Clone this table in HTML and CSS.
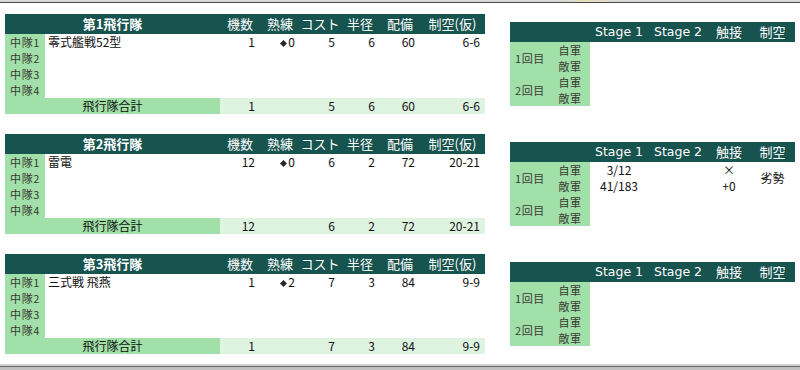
FILE: index.html
```html
<!DOCTYPE html>
<html lang="ja">
<head>
<meta charset="utf-8">
<title>制空計算</title>
<link rel="stylesheet" href="styles.css">
</head>
<body>
<div class="topbar"></div>
<main class="sheet">
  <section class="block">
    <table class="fleet">
      <colgroup><col class="c-lab"><col class="c-name"><col class="c-n"><col class="c-n"><col class="c-n"><col class="c-n"><col class="c-n"><col class="c-air"></colgroup>
      <thead><tr><th colspan="2" class="title">第1飛行隊</th><th>機数</th><th>熟練</th><th>コスト</th><th>半径</th><th>配備</th><th>制空(仮)</th></tr></thead>
      <tbody>
        <tr><td class="lab">中隊1</td><td class="name">零式艦戦52型</td><td class="num">1</td><td class="num"><span class="dia"></span>0</td><td class="num">5</td><td class="num">6</td><td class="num">60</td><td class="num">6-6</td></tr>
        <tr><td class="lab">中隊2</td><td class="name"></td><td></td><td></td><td></td><td></td><td></td><td></td></tr>
        <tr><td class="lab">中隊3</td><td class="name"></td><td></td><td></td><td></td><td></td><td></td><td></td></tr>
        <tr><td class="lab">中隊4</td><td class="name"></td><td></td><td></td><td></td><td></td><td></td><td></td></tr>
        <tr class="total"><td colspan="2" class="tlab">飛行隊合計</td><td class="num">1</td><td class="num"></td><td class="num">5</td><td class="num">6</td><td class="num">60</td><td class="num">6-6</td></tr>
      </tbody>
    </table>
    <table class="battle">
      <colgroup><col class="b-lab"><col class="b-side"><col class="b-s1"><col class="b-s2"><col class="b-c"><col class="b-a"></colgroup>
      <thead><tr><th colspan="2"></th><th class="lat">Stage 1</th><th class="lat">Stage 2</th><th>触接</th><th>制空</th></tr></thead>
      <tbody>
        <tr><td rowspan="2" class="lab">1回目</td><td class="lab">自軍</td><td></td><td></td><td></td><td rowspan="2"></td></tr>
        <tr><td class="lab">敵軍</td><td></td><td></td><td></td></tr>
        <tr><td rowspan="2" class="lab">2回目</td><td class="lab">自軍</td><td></td><td></td><td></td><td rowspan="2"></td></tr>
        <tr><td class="lab">敵軍</td><td></td><td></td><td></td></tr>
      </tbody>
    </table>
  </section>

  <section class="block">
    <table class="fleet">
      <colgroup><col class="c-lab"><col class="c-name"><col class="c-n"><col class="c-n"><col class="c-n"><col class="c-n"><col class="c-n"><col class="c-air"></colgroup>
      <thead><tr><th colspan="2" class="title">第2飛行隊</th><th>機数</th><th>熟練</th><th>コスト</th><th>半径</th><th>配備</th><th>制空(仮)</th></tr></thead>
      <tbody>
        <tr><td class="lab">中隊1</td><td class="name">雷電</td><td class="num">12</td><td class="num"><span class="dia"></span>0</td><td class="num">6</td><td class="num">2</td><td class="num">72</td><td class="num">20-21</td></tr>
        <tr><td class="lab">中隊2</td><td class="name"></td><td></td><td></td><td></td><td></td><td></td><td></td></tr>
        <tr><td class="lab">中隊3</td><td class="name"></td><td></td><td></td><td></td><td></td><td></td><td></td></tr>
        <tr><td class="lab">中隊4</td><td class="name"></td><td></td><td></td><td></td><td></td><td></td><td></td></tr>
        <tr class="total"><td colspan="2" class="tlab">飛行隊合計</td><td class="num">12</td><td class="num"></td><td class="num">6</td><td class="num">2</td><td class="num">72</td><td class="num">20-21</td></tr>
      </tbody>
    </table>
    <table class="battle">
      <colgroup><col class="b-lab"><col class="b-side"><col class="b-s1"><col class="b-s2"><col class="b-c"><col class="b-a"></colgroup>
      <thead><tr><th colspan="2"></th><th class="lat">Stage 1</th><th class="lat">Stage 2</th><th>触接</th><th>制空</th></tr></thead>
      <tbody>
        <tr><td rowspan="2" class="lab">1回目</td><td class="lab">自軍</td><td class="c">3/12</td><td></td><td class="c">×</td><td rowspan="2" class="c">劣勢</td></tr>
        <tr><td class="lab">敵軍</td><td class="c">41/183</td><td></td><td class="c">+0</td></tr>
        <tr><td rowspan="2" class="lab">2回目</td><td class="lab">自軍</td><td></td><td></td><td></td><td rowspan="2"></td></tr>
        <tr><td class="lab">敵軍</td><td></td><td></td><td></td></tr>
      </tbody>
    </table>
  </section>

  <section class="block">
    <table class="fleet">
      <colgroup><col class="c-lab"><col class="c-name"><col class="c-n"><col class="c-n"><col class="c-n"><col class="c-n"><col class="c-n"><col class="c-air"></colgroup>
      <thead><tr><th colspan="2" class="title">第3飛行隊</th><th>機数</th><th>熟練</th><th>コスト</th><th>半径</th><th>配備</th><th>制空(仮)</th></tr></thead>
      <tbody>
        <tr><td class="lab">中隊1</td><td class="name">三式戦 飛燕</td><td class="num">1</td><td class="num"><span class="dia"></span>2</td><td class="num">7</td><td class="num">3</td><td class="num">84</td><td class="num">9-9</td></tr>
        <tr><td class="lab">中隊2</td><td class="name"></td><td></td><td></td><td></td><td></td><td></td><td></td></tr>
        <tr><td class="lab">中隊3</td><td class="name"></td><td></td><td></td><td></td><td></td><td></td><td></td></tr>
        <tr><td class="lab">中隊4</td><td class="name"></td><td></td><td></td><td></td><td></td><td></td><td></td></tr>
        <tr class="total"><td colspan="2" class="tlab">飛行隊合計</td><td class="num">1</td><td class="num"></td><td class="num">7</td><td class="num">3</td><td class="num">84</td><td class="num">9-9</td></tr>
      </tbody>
    </table>
    <table class="battle">
      <colgroup><col class="b-lab"><col class="b-side"><col class="b-s1"><col class="b-s2"><col class="b-c"><col class="b-a"></colgroup>
      <thead><tr><th colspan="2"></th><th class="lat">Stage 1</th><th class="lat">Stage 2</th><th>触接</th><th>制空</th></tr></thead>
      <tbody>
        <tr><td rowspan="2" class="lab">1回目</td><td class="lab">自軍</td><td></td><td></td><td></td><td rowspan="2"></td></tr>
        <tr><td class="lab">敵軍</td><td></td><td></td><td></td></tr>
        <tr><td rowspan="2" class="lab">2回目</td><td class="lab">自軍</td><td></td><td></td><td></td><td rowspan="2"></td></tr>
        <tr><td class="lab">敵軍</td><td></td><td></td><td></td></tr>
      </tbody>
    </table>
  </section>
</main>
<div class="bottombar"></div>
</body>
</html>
```

FILE: styles.css
```css
html, body {
  margin: 0;
  padding: 0;
  background: #ffffff;
  overflow: hidden;
  width: 800px;
  height: 370px;
}
body {
  font-family: "Noto Sans CJK JP", "Noto Sans", sans-serif;
  font-size: 12px;
  line-height: 16px;
  color: #1a1a1a;
}
.topbar {
  height: 2px;
  background: linear-gradient(to right, #d6d6d6 0, #d6d6d6 560px, #e8dfb8 590px, #d6d6d6 620px, #d6d6d6 100%);
  border-bottom: 1px solid #4a4a4a;
}
.sheet {
  display: flex;
  flex-direction: column;
  gap: 20px;
  padding: 11px 0 0 5px;
}
.block {
  display: flex;
  align-items: flex-start;
  gap: 25px;
  height: 100px;
}
table {
  border-collapse: collapse;
  table-layout: fixed;
  border-spacing: 0;
}
th, td {
  padding: 0;
  white-space: nowrap;
}
thead tr { height: 20px; }
tbody tr { height: 16px; }
thead th {
  background: #17534f;
  color: #ffffff;
  font-weight: normal;
  font-size: 13px;
  height: 20px;
  line-height: 20px;
  text-align: center;
}
tbody td {
  height: 16px;
  line-height: 16px;
  font-size: 12px;
}
.fleet { width: 480px; }
.c-lab { width: 40px; }
.c-name { width: 175px; }
.c-n { width: 40px; }
.c-air { width: 65px; }
thead th.title {
  font-weight: bold;
}
thead th.lat {
  font-family: "DejaVu Sans", sans-serif;
  font-size: 12.5px;
}
.lab {
  background: #a1e0a9;
  color: #3b3b33;
  text-align: center;
}
tbody td.lab {
  font-size: 11px;
  letter-spacing: 0.6px;
}
.name {
  padding-left: 3px;
  color: #111;
}
.num {
  text-align: right;
  padding-right: 5px;
  color: #111;
}
.dia {
  display: inline-block;
  width: 5px;
  height: 5px;
  margin: 0 2px 1px 1px;
  background: #2a2a2a;
  transform: rotate(45deg);
  vertical-align: middle;
}
.total td { background: #dff3e1; }
.total td.tlab {
  background: #a1e0a9;
  text-align: center;
  color: #111;
}
.battle {
  width: 285px;
  margin-top: 8px;
}
.b-lab { width: 40px; }
.b-side { width: 40px; }
.b-s1 { width: 58px; }
.b-s2 { width: 60px; }
.b-c { width: 42px; }
.b-a { width: 45px; }
.c {
  text-align: center;
  color: #111;
}
.bottombar {
  margin-top: 10px;
  height: 6px;
  border-top: 2px solid #d0d0d0;
  background: linear-gradient(#6a6a6a 0, #6a6a6a 1px, #bdbdbd 1px, #c4c4c4 100%);
}
```
